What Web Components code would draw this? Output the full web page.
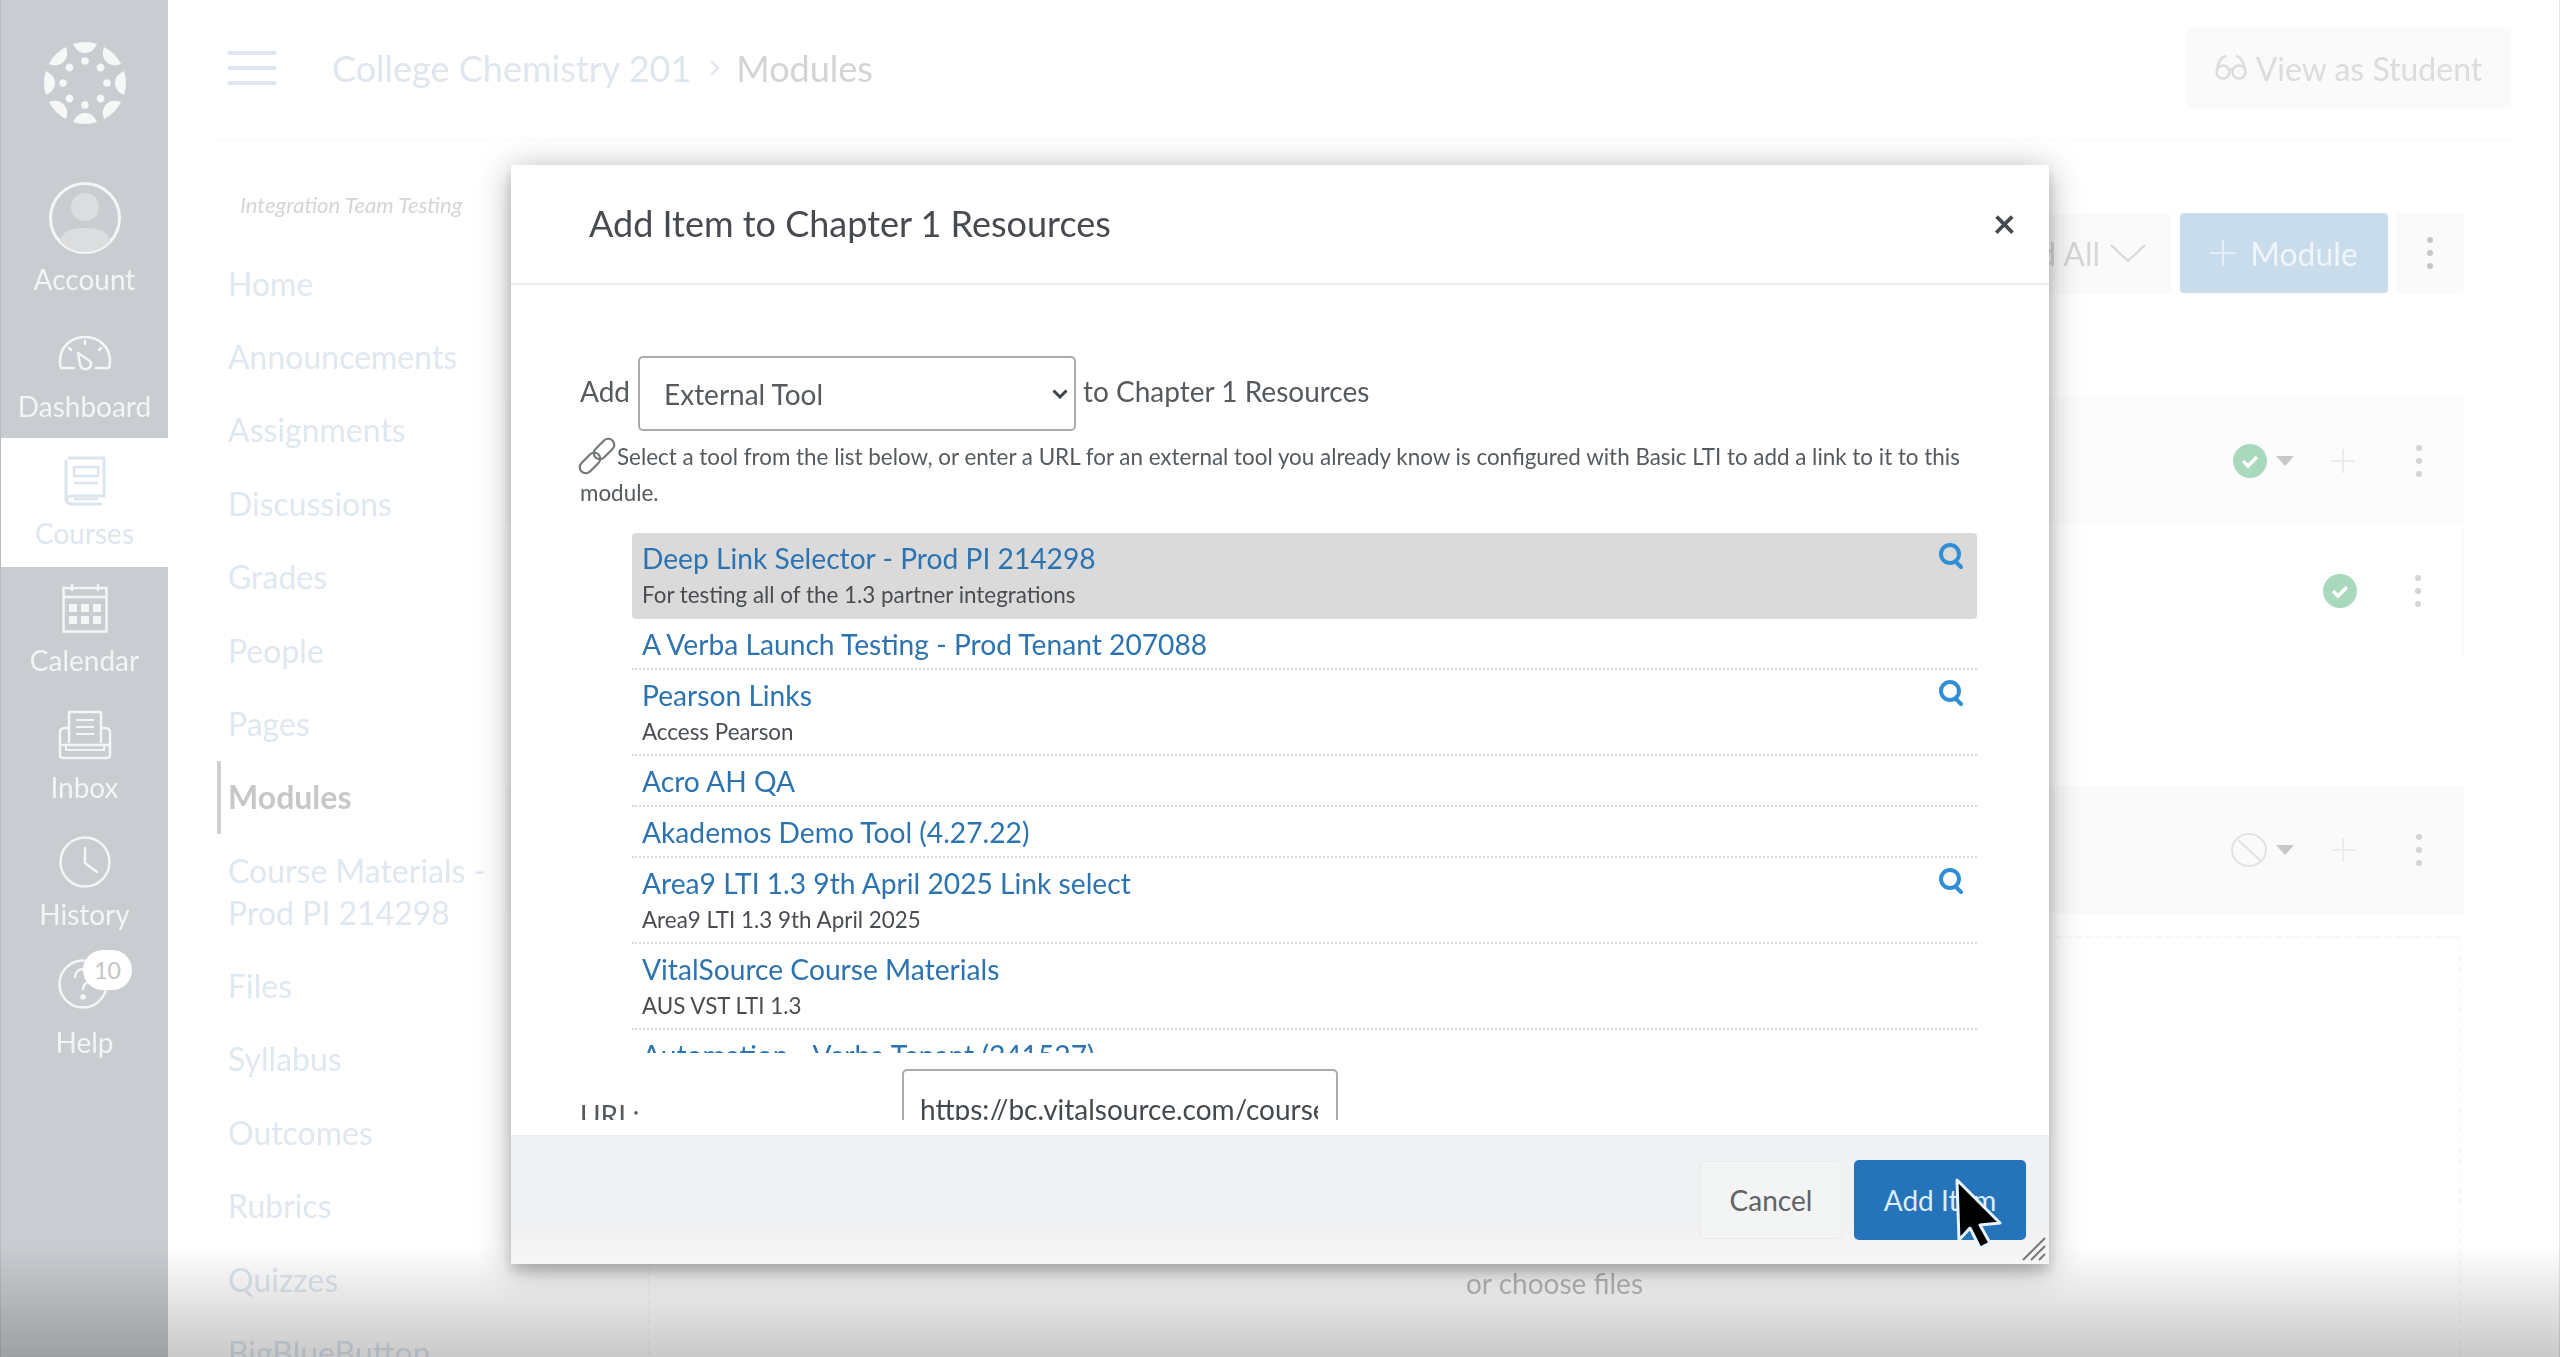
<!DOCTYPE html>
<html lang="en">
<head>
<meta charset="utf-8">
<title>Modules</title>
<style>
  html, body { margin: 0; height: 100%; overflow: hidden; background: #fff; font-family: Lato, "Open Sans", sans-serif; }
  svg { display: block; }
</style>
</head>
<body>
<canvas-app>
  <global-nav slot="nav">
    <nav-item label="Account">
      <svg width="72" height="74" viewBox="0 0 72 74" style="margin-top:-18px" fill="none">
        <circle cx="36" cy="37" r="34.5" fill="#c9ccd0" stroke="#f4f5f5" stroke-width="3"/>
        <circle cx="36" cy="26" r="14" fill="#dcdddf"/>
        <path d="M11 60c3-12 15-13 25-13s22 1 25 13c-6 7-15 11-25 11s-19-4-25-11z" fill="#dcdddf"/>
      </svg>
    </nav-item>
    <nav-item label="Dashboard">
      <svg width="54" height="37" viewBox="0 0 54 37" fill="none" stroke="#f4f5f5" stroke-width="2.5" stroke-linecap="round" stroke-linejoin="round">
        <path d="M16 33H3c-1-2-1-5-1-7C2 12 13 2 27 2s25 10 25 24c0 2 0 5-1 7H38"/>
        <path d="M20 18l12 8c2 3 1 7-3 8-4 1-7-2-7-5z"/>
        <path d="M27 6v3M11 13l2 2M43 13l-2 2"/>
      </svg>
    </nav-item>
    <nav-item label="Courses" active>
      <svg width="42" height="50" viewBox="0 0 42 50" fill="none" stroke="#dbe5f0" stroke-width="3" stroke-linejoin="round">
        <path d="M4 2h36v38H8c-3 0-6 2-6 4s3 4 6 4h30"/>
        <path d="M2 44V4"/>
        <rect x="10" y="11" width="24" height="9" stroke-width="2.5"/>
        <path d="M10 27h24M10 43h24" stroke-width="2.5"/>
      </svg>
    </nav-item>
    <nav-item label="Calendar">
      <svg width="46" height="50" viewBox="0 0 46 50" fill="none" stroke="#f4f5f5" stroke-width="2.5">
        <rect x="1.5" y="5" width="43" height="43.5"/>
        <path d="M1.5 14h43M10 1v7M36 1v7"/>
        <g fill="#f4f5f5" stroke="none"><rect x="7" y="21" width="8" height="8"/><rect x="19" y="21" width="8" height="8"/><rect x="31" y="21" width="8" height="8"/><rect x="7" y="33" width="8" height="8"/><rect x="19" y="33" width="8" height="8"/><rect x="31" y="33" width="8" height="8"/></g>
      </svg>
    </nav-item>
    <nav-item label="Inbox">
      <svg width="54" height="50" viewBox="0 0 54 50" fill="none" stroke="#f4f5f5" stroke-width="2.5" stroke-linejoin="round">
        <path d="M11 33V2h32v31"/>
        <path d="M18 10h18M18 17h18M18 24h18" stroke-width="2"/>
        <path d="M11 18H6c-2 0-4 2-4 4v23c0 2 1 3 3 3h44c2 0 3-1 3-3V22c0-2-2-4-4-4h-5"/>
        <path d="M2 35h50"/>
        <path d="M8 35v5h38v-5" stroke-width="2"/>
      </svg>
    </nav-item>
    <nav-item label="History">
      <svg width="52" height="52" viewBox="0 0 52 52" fill="none" stroke="#f4f5f5" stroke-width="2.5" stroke-linecap="round">
        <circle cx="26" cy="26" r="24.5"/>
        <path d="M26 12v15l12 9"/>
      </svg>
    </nav-item>
    <nav-item label="Help" badge="10">
      <svg width="50" height="50" viewBox="0 0 50 50" fill="none" stroke="#f4f5f5" stroke-width="2.5" stroke-linecap="round" style="margin:-12px 4px 0 0">
        <circle cx="25" cy="25" r="23.5"/>
        <path d="M17 18c0-5 4-8 8-8s8 3 8 7c0 6-8 6-8 13"/>
        <circle cx="25" cy="38" r="1.5"/>
      </svg>
    </nav-item>
  </global-nav>
  <page-header slot="header" course="College Chemistry 201" page="Modules"></page-header>
  <course-menu slot="menu" term="Integration Team Testing">
    <menu-link>Home</menu-link>
    <menu-link>Announcements</menu-link>
    <menu-link>Assignments</menu-link>
    <menu-link>Discussions</menu-link>
    <menu-link>Grades</menu-link>
    <menu-link>People</menu-link>
    <menu-link>Pages</menu-link>
    <menu-link current>Modules</menu-link>
    <menu-link>Course Materials - Prod PI 214298</menu-link>
    <menu-link>Files</menu-link>
    <menu-link>Syllabus</menu-link>
    <menu-link>Outcomes</menu-link>
    <menu-link>Rubrics</menu-link>
    <menu-link>Quizzes</menu-link>
    <menu-link>BigBlueButton</menu-link>
  </course-menu>
  <module-area slot="content">
    <module-row kind="header" status="check"></module-row>
    <module-row kind="item" status="check"></module-row>
    <module-row kind="header" status="ban" style="margin-top:129px"></module-row>
  </module-area>
</canvas-app>

<div id="fade" style="position:absolute;left:0;right:0;bottom:0;height:112px;background:linear-gradient(rgba(0,0,0,0),rgba(0,0,0,.21));"></div>

<add-item-dialog module="Chapter 1 Resources">
  <tool-row name="Deep Link Selector - Prod PI 214298" note="For testing all of the 1.3 partner integrations" search selected></tool-row>
  <tool-row name="A Verba Launch Testing - Prod Tenant 207088"></tool-row>
  <tool-row name="Pearson Links" note="Access Pearson" search></tool-row>
  <tool-row name="Acro AH QA"></tool-row>
  <tool-row name="Akademos Demo Tool (4.27.22)"></tool-row>
  <tool-row name="Area9 LTI 1.3 9th April 2025 Link select" note="Area9 LTI 1.3 9th April 2025" search></tool-row>
  <tool-row name="VitalSource Course Materials" note="AUS VST LTI 1.3"></tool-row>
  <tool-row name="Automation - Verba Tenant (241527)"></tool-row>
</add-item-dialog>

<script>
const logoSvg = () => {
  let parts = "";
  for (let i = 0; i < 8; i++) {
    const a = i * 45;
    parts += `<g transform="rotate(${a})"><path d="M-12 -39Q0 -43 12 -39Q8 -30 0 -30Q-8 -30 -12 -39Z"/><circle cy="-22" r="3.8"/></g>`;
  }
  return `<svg width="86" height="86" viewBox="-43 -43 86 86" fill="#f6f7f7">${parts}</svg>`;
};

class CanvasApp extends HTMLElement {
  constructor() {
    super();
    this.attachShadow({ mode: "open" }).innerHTML = `
      <style>
        :host { display: grid; grid-template-columns: 168px 1fr; height: 1357px; overflow: hidden; filter: blur(.7px); border-right: 1px solid #e6e6e6; box-sizing: border-box; }
        .main { padding: 0 44px 0 47px; min-width: 0; }
        .cols { display: grid; grid-template-columns: 290px 1fr; }
      </style>
      <slot name="nav"></slot>
      <div class="main">
        <slot name="header"></slot>
        <div class="cols"><slot name="menu"></slot><slot name="content"></slot></div>
      </div>`;
  }
}

class GlobalNav extends HTMLElement {
  constructor() {
    super();
    this.attachShadow({ mode: "open" }).innerHTML = `
      <style>
        :host { display: block; background: #c9ccd0; border-left: 1px solid #b8bbbf; box-sizing: border-box; height: 1357px; }
        .logo { height: 183.5px; display: flex; justify-content: center; padding-top: 40px; box-sizing: border-box; }
      </style>
      <div class="logo">${logoSvg()}</div>
      <slot></slot>`;
  }
}

class NavItem extends HTMLElement {
  constructor() {
    super();
    const badge = this.getAttribute("badge");
    this.attachShadow({ mode: "open" }).innerHTML = `
      <style>
        :host { display: block; height: 127.2px; position: relative; color: #f3f4f5; text-align: center; font-size: 28px; line-height: 28px; }
        :host([active]) { background: #fff; color: #dde6f0; height: 129.6px; margin-bottom: -2.4px; }
        .icon { height: 86px; display: flex; align-items: center; justify-content: center; }
        .label { margin-top: -5px; }
        .badge { position: absolute; left: 82px; top: 3px; width: 49px; height: 40px; border-radius: 20px; background: #fff; color: #c2c5c8; font-size: 23px; line-height: 40px; }
      </style>
      <div class="icon"><slot></slot></div>
      <div class="label">${this.getAttribute("label")}</div>
      ${badge ? `<div class="badge">${badge}</div>` : ""}`;
  }
}

class PageHeader extends HTMLElement {
  constructor() {
    super();
    this.attachShadow({ mode: "open" }).innerHTML = `
      <style>
        :host { display: flex; align-items: center; height: 140px; box-sizing: border-box; border-bottom: 1px solid #fafafa; padding: 0 4px 3px 13px; font-size: 36px; }
        .burger { width: 48px; height: 34px; display: flex; flex-direction: column; justify-content: space-between; margin-right: 56px; }
        .burger i { height: 4px; background: #dfe6f0; }
        .crumb { color: #dfe6ee; }
        .sep { margin: 0 14px 0 15px; }
        .page { color: #d3d4d6; }
        .student { margin-left: auto; width: 325px; height: 80px; background: #fafafa; border-radius: 4px; color: #dcdcdc; display: flex; align-items: center; justify-content: center; gap: 9px; font-size: 32px; }
      </style>
      <div class="burger"><i></i><i></i><i></i></div>
      <span class="crumb">${this.getAttribute("course")}</span>
      <svg class="sep" width="16" height="24" viewBox="0 0 16 24" fill="none" stroke="#dfe3e8" stroke-width="2"><path d="M5 5l7 7-7 7"/></svg>
      <span class="page">${this.getAttribute("page")}</span>
      <div class="student">
        <svg width="32" height="28" viewBox="0 0 32 28" fill="none" stroke="#dcdcdc" stroke-width="2.5"><circle cx="8" cy="18" r="6.5"/><circle cx="24" cy="18" r="6.5"/><path d="M14 16c1-1 3-1 4 0M2 16C3 9 6 3 11 2M30 16C29 9 26 3 21 2"/></svg>
        <span>View as Student</span>
      </div>`;
  }
}

class CourseMenu extends HTMLElement {
  constructor() {
    super();
    this.attachShadow({ mode: "open" }).innerHTML = `
      <style>
        :host { display: block; padding-top: 51px; }
        .term { padding-left: 25px; font-style: italic; font-size: 22.1px; line-height: 28px; color: #d4d5d6; margin-bottom: 28px; }
      </style>
      <div class="term">${this.getAttribute("term")}</div>
      <slot></slot>`;
  }
}

class MenuLink extends HTMLElement {
  constructor() {
    super();
    this.attachShadow({ mode: "open" }).innerHTML = `
      <style>
        :host { display: block; box-sizing: border-box; margin-left: 2px; border-left: 4px solid transparent; padding: 15.7px 0 15.7px 7px; font-size: 32px; line-height: 42px; color: #dfe7f0; width: 275px; }
        :host([current]) { border-left-color: #cfd0d2; color: #c6c7c9; font-weight: 700; }
      </style>
      <slot></slot>`;
  }
}

class ModuleArea extends HTMLElement {
  constructor() {
    super();
    this.attachShadow({ mode: "open" }).innerHTML = `
      <style>
        :host { display: block; padding: 73px 51px 0 0; }
        .toolbar { display: flex; justify-content: flex-end; gap: 8px; height: 80px; margin-bottom: 105px; font-size: 32px; }
        .btn { display: flex; align-items: center; justify-content: center; background: #fafafa; border-radius: 4px; color: #d5d6d7; }
        .collapse { gap: 10px; padding: 0 25px; margin-right: 1px; white-space: nowrap; }
        .add { width: 208px; gap: 14px; background: #c9dcec; color: #eff5fa; }
        .more { width: 68px; }
        .drop { margin: 23px 3px 0 143px; height: 500px; border: 2px dashed #f8f8f8; border-bottom: 0; text-align: center; box-sizing: border-box; padding-top: 329px; font-size: 28px; line-height: 32px; color: #bdbdbd; }
        .dots { display: flex; flex-direction: column; gap: 7px; }
        .dots i { width: 6px; height: 6px; border-radius: 50%; background: #c5c6c8; }
      </style>
      <div class="toolbar">
        <div class="btn collapse"><span>Expand All</span>
          <svg width="36" height="20" viewBox="0 0 36 20" fill="none" stroke="#d5d6d7" stroke-width="2"><path d="M1 2l17 16L35 2"/></svg>
        </div>
        <div class="btn add">
          <svg width="26" height="26" viewBox="0 0 26 26" stroke="#e4eef6" stroke-width="2"><path d="M13 0v26M0 13h26"/></svg>
          <span>Module</span>
        </div>
        <div class="btn more"><div class="dots"><i></i><i></i><i></i></div></div>
      </div>
      <slot></slot>
      <div class="drop">or choose files</div>`;
  }
}

class ModuleRow extends HTMLElement {
  constructor() {
    super();
    const header = this.getAttribute("kind") === "header";
    const check = this.getAttribute("status") === "check";
    const statusIcon = check
      ? `<svg width="34" height="34" viewBox="0 0 34 34"><circle cx="17" cy="17" r="17" fill="#a9d9bd"/><path d="M10 17l5 5 9-9" fill="none" stroke="#fff" stroke-width="3.5"/></svg>`
      : `<svg width="36" height="34" viewBox="0 0 36 34" fill="none" stroke="#e3e3e3" stroke-width="2"><ellipse cx="18" cy="17" rx="17" ry="16"/><path d="M7 7l22 20"/></svg>`;
    this.attachShadow({ mode: "open" }).innerHTML = `
      <style>
        :host { display: flex; align-items: center; justify-content: flex-end; height: ${header ? 126 : 134}px; padding-right: 42px; box-sizing: border-box; background: ${header ? (check ? "#fcfcfc" : "#fafafa") : "#fff"}; ${header ? "" : "border-right: 1px solid #fbfbfb;"} }
        .caret { width: 0; height: 0; border: 9px solid transparent; border-top: 10px solid #c6c7c8; border-bottom: 0; margin-left: 9px; }
        .plus { margin-left: 37px; }
        .dots { display: flex; flex-direction: column; gap: 7px; margin-left: ${header ? 61 : 58}px; }
        .dots i { width: 6px; height: 6px; border-radius: 50%; background: #d3d4d5; }
      </style>
      ${statusIcon}
      ${header ? `<div class="caret"></div>
        <svg class="plus" width="24" height="24" viewBox="0 0 24 24" stroke="#ececec" stroke-width="2"><path d="M12 0v24M0 12h24"/></svg>` : ""}
      <div class="dots"><i></i><i></i><i></i></div>`;
  }
}

class AddItemDialog extends HTMLElement {
  constructor() {
    super();
    const mod = this.getAttribute("module");
    this.attachShadow({ mode: "open" }).innerHTML = `
      <style>
        :host { position: absolute; left: 511px; top: 165px; width: 1538px; height: 1099px; display: flex; flex-direction: column; background: #fff; box-shadow: 0 4px 34px rgba(0,0,0,.3), 0 8px 12px rgba(0,0,0,.16); color: #555a5e; border-radius: 2px; filter: blur(.5px); }
        .head { height: 120px; flex: none; box-sizing: border-box; border-bottom: 2px solid #ececec; display: flex; align-items: center; justify-content: space-between; padding: 0 33px 2px 78px; }
        h2 { margin: 0; font-weight: 400; font-size: 36px; color: #474b4f; }
        .close { font-size: 40px; line-height: 1; color: #474b4f; font-weight: 700; }
        .body { flex: 1; min-height: 0; overflow: hidden; padding: 71px 72px 0 69px; margin-bottom: 15px; }
        .addrow { display: flex; align-items: center; gap: 7px; font-size: 28px; }
        .addrow > span { padding-bottom: 5px; }
        .pick { margin-left: 1px; }
        .pick svg { position: absolute; margin: -42px 0 0 414px; pointer-events: none; }
        select { display: block; appearance: none; width: 438px; height: 75px; box-sizing: border-box; border: 2px solid #a9abad; border-radius: 5px; background: #fff; padding-left: 24px; font: 28px Lato, sans-serif; color: #555a5e; margin: 0; }
        .desc { margin: 8px 0 22px; font-size: 22.4px; line-height: 36px; }
        .desc svg { display: inline-block; vertical-align: -8px; margin: 0 4px 0 1px; overflow: visible; }
        .list { height: 520px; overflow: hidden; margin-left: 52px; }
        .url { display: flex; margin-top: 16px; height: 80px; }
        .url label { width: 322px; padding-top: 28px; font-size: 28px; line-height: 36px; }
        .field { width: 436px; height: 76px; box-sizing: border-box; border: 2px solid #a9abad; border-radius: 5px; padding: 20px 18px 0 16px; font-size: 28px; line-height: 36px; color: #44494d; }
        .field div { overflow: hidden; white-space: nowrap; }
        .foot { height: 129px; flex: none; box-sizing: border-box; background: linear-gradient(#f0f1f2 70%, #f6f6f7); border-top: 1px solid #eeeeee; display: flex; align-items: center; justify-content: flex-end; gap: 12px; padding-right: 23px; font-size: 28px; position: relative; }
        .cancel, .primary { display: flex; align-items: center; justify-content: center; border-radius: 5px; }
        .cancel { width: 142px; height: 78px; background: #f3f4f4; border: 1px solid #e9eaea; box-sizing: border-box; color: #5f6367; }
        .primary { width: 172px; height: 80px; background: #2573b8; color: #dcedfb; }
        .grip { position: absolute; right: 3px; bottom: 3px; }
        .cursor { position: absolute; left: 1446px; top: 1015px; overflow: visible; }
      </style>
      <div class="head"><h2>Add Item to ${mod}</h2><span class="close">×</span></div>
      <div class="body">
        <div class="addrow"><span>Add</span>
          <div class="pick">
            <select><option>External Tool</option></select>
            <svg width="16" height="10" viewBox="0 0 16 10" fill="none" stroke="#3f4347" stroke-width="3"><path d="M1.5 1.5L8 8l6.5-6.5"/></svg>
          </div>
          <span>to ${mod}</span>
        </div>
        <div class="desc">
          <svg width="32" height="32" viewBox="0 0 32 32" fill="none" stroke="#75787a" stroke-width="2.2"><rect x="17" y="-4" width="12" height="24" rx="6" transform="rotate(45 23 8)"/><rect x="3" y="10" width="12" height="24" rx="6" transform="rotate(45 9 22)"/></svg>Select a tool from the list below, or enter a URL for an external tool you already know is configured with Basic LTI to add a link to it to this module.
        </div>
        <div class="list"><slot></slot></div>
        <div class="url"><label>URL:</label><div class="field"><div>https://bc.vitalsource.com/course</div></div></div>
      </div>
      <div class="foot">
        <div class="cancel">Cancel</div>
        <div class="primary">Add Item</div>
        <svg class="grip" width="24" height="24" viewBox="0 0 24 24" stroke="#77797b" stroke-width="2"><path d="M1 23L23 1M9 23L23 9M17 23l6-6"/></svg>
      </div>
      <svg class="cursor" width="46" height="72" viewBox="0 0 46 72"><path d="M0 0L2 60 13 48 23 68 33 63 23 45 43 43Z" fill="#000" stroke="#e8f4ff" stroke-width="3" stroke-linejoin="round"/></svg>`;
  }
}

class ToolRow extends HTMLElement {
  constructor() {
    super();
    const note = this.getAttribute("note");
    this.attachShadow({ mode: "open" }).innerHTML = `
      <style>
        :host { display: flex; justify-content: space-between; box-sizing: border-box; padding: 7px 13px 6px 10px; border-bottom: 2px dotted #d9d9d9; }
        :host([selected]) { background: #dadada; border-bottom-color: transparent; border-radius: 4px; }
        .name { font-size: 28.2px; line-height: 36px; color: #2d73b0; }
        .note { font-size: 22.4px; line-height: 34px; margin: 2px 0 -1px; color: #494d51; }
        svg { margin-top: 2px; flex: none; }
      </style>
      <div>
        <div class="name">${this.getAttribute("name")}</div>
        ${note ? `<div class="note">${note}</div>` : ""}
      </div>
      ${this.hasAttribute("search") ? `<svg width="26" height="28" viewBox="0 0 26 28" fill="none" stroke="#2f8fd6" stroke-width="4" stroke-linecap="round"><circle cx="12" cy="12" r="9"/><path d="M18 20l5 5"/></svg>` : ""}`;
  }
}

customElements.define("canvas-app", CanvasApp);
customElements.define("global-nav", GlobalNav);
customElements.define("nav-item", NavItem);
customElements.define("page-header", PageHeader);
customElements.define("course-menu", CourseMenu);
customElements.define("menu-link", MenuLink);
customElements.define("module-area", ModuleArea);
customElements.define("module-row", ModuleRow);
customElements.define("add-item-dialog", AddItemDialog);
customElements.define("tool-row", ToolRow);
</script>
</body>
</html>
